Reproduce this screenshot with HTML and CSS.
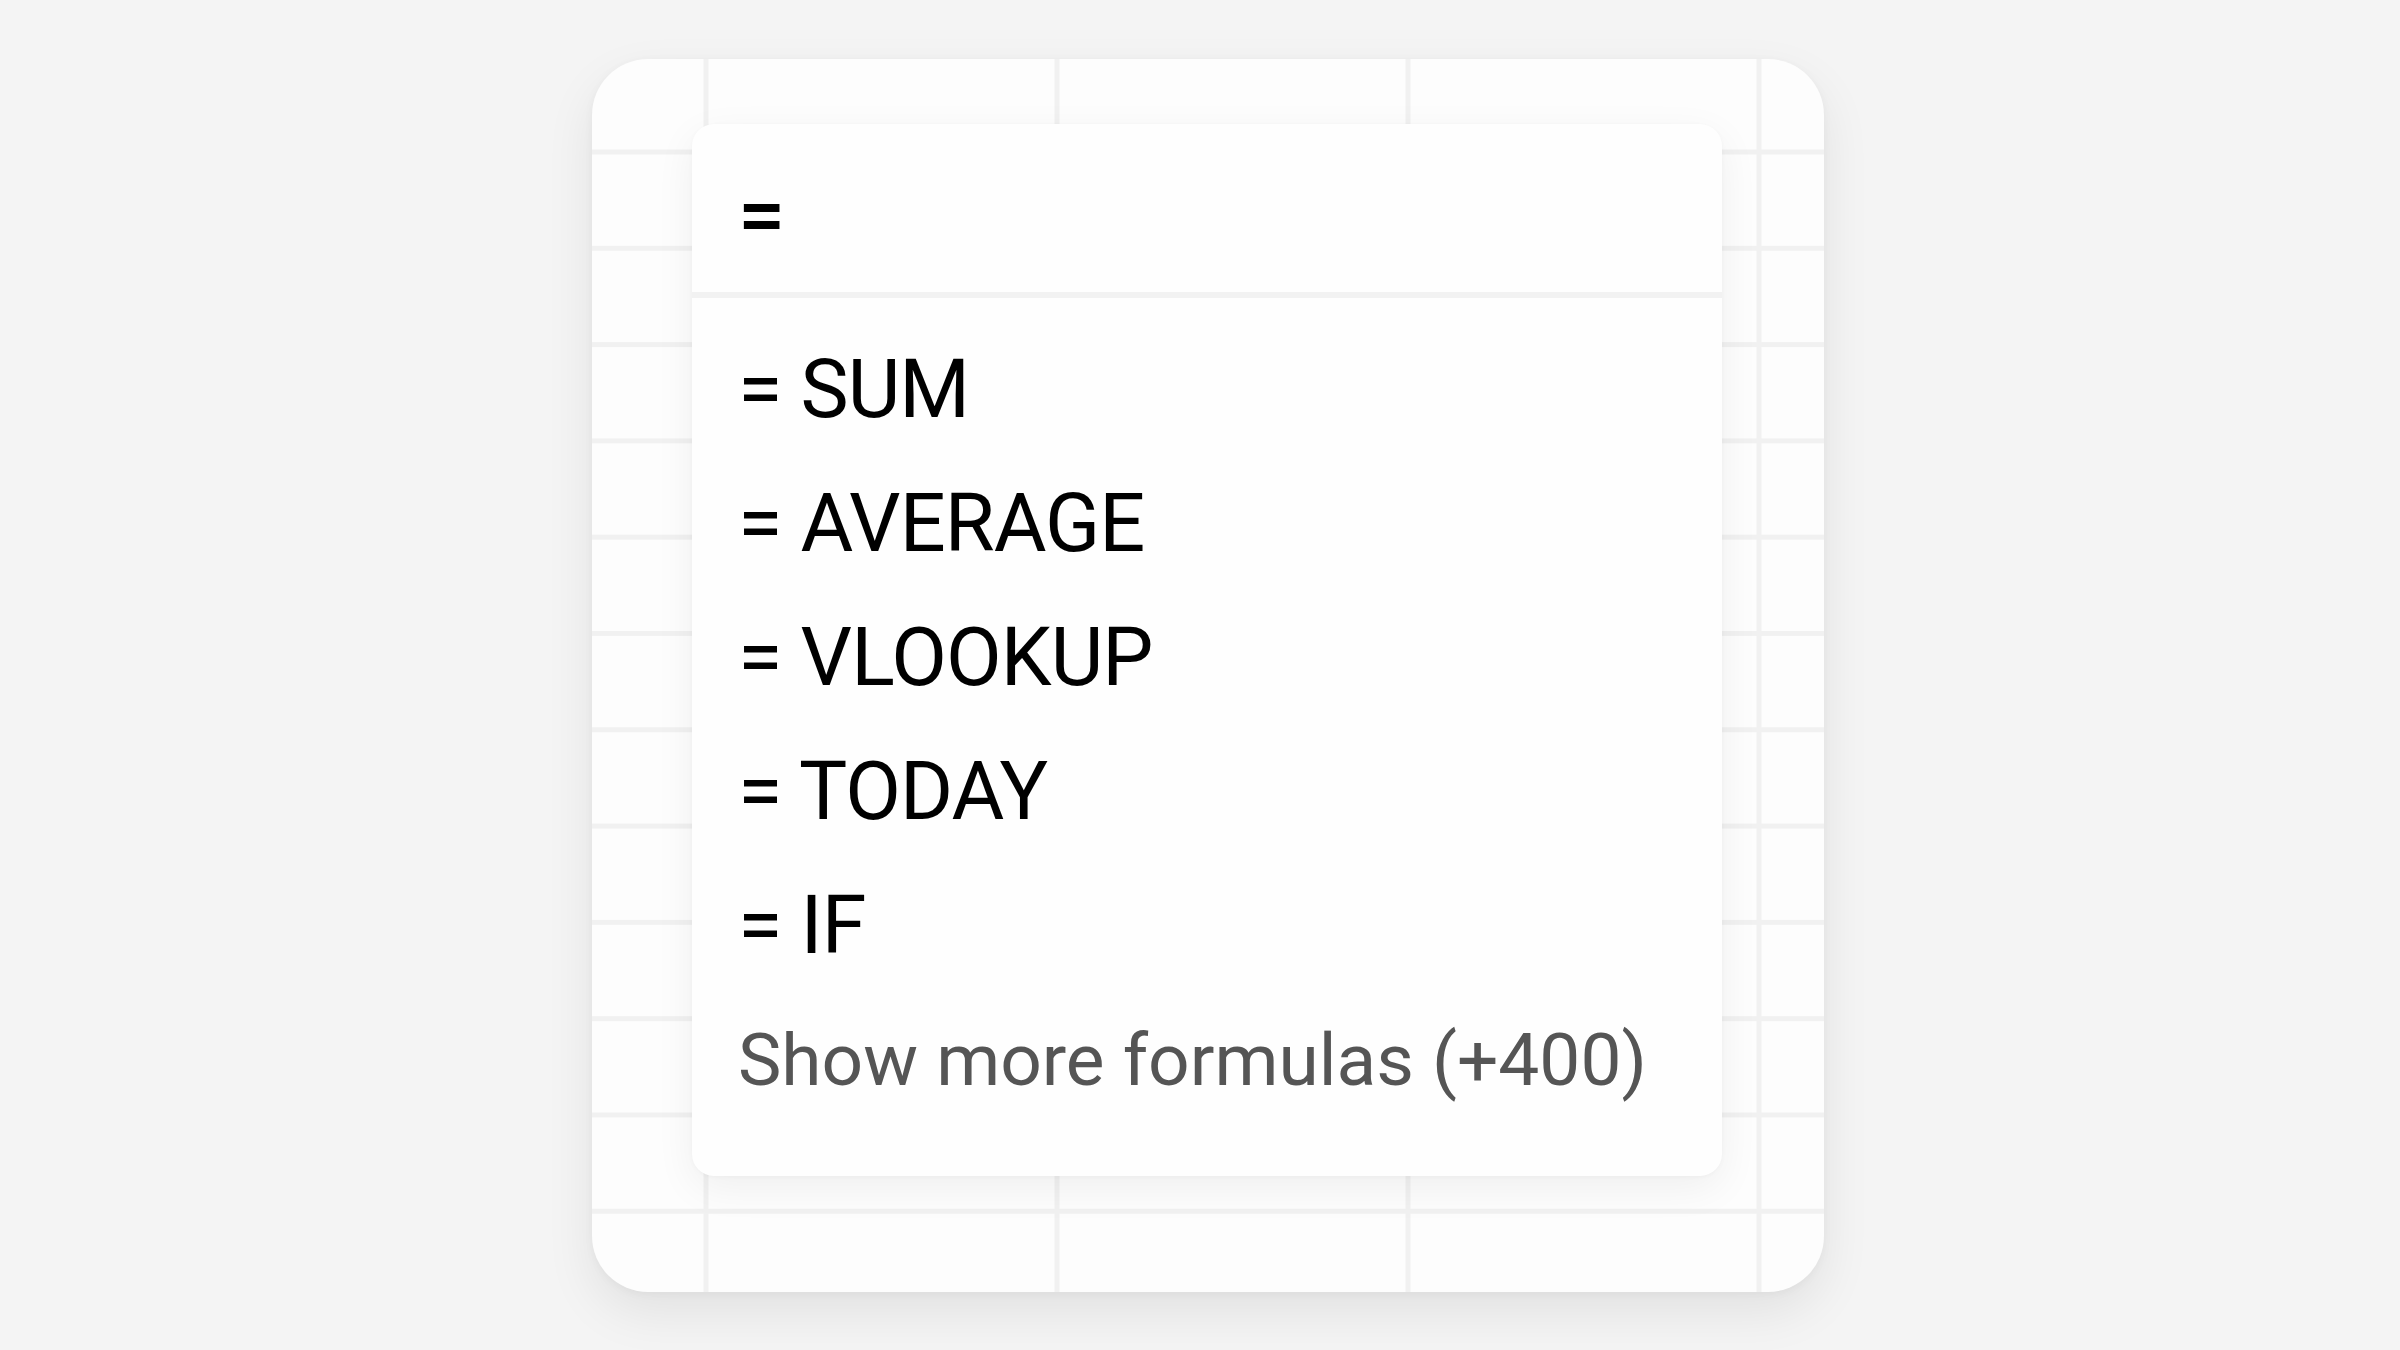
FILE: index.html
```html
<!DOCTYPE html>
<html lang="en">
<head>
    <meta charset="UTF-8">
    <meta name="viewport" content="width=device-width, initial-scale=1.0">
    <title>Formulas</title>
    <link rel="stylesheet" href="styles.css">
</head>
<body>
    <div class="sheet">
        <div class="popup">
            <div class="input">=</div>
            <ul class="formulas">
                <li>= SUM</li>
                <li>= AVERAGE</li>
                <li>= VLOOKUP</li>
                <li>= TODAY</li>
                <li>= IF</li>
                <li class="more">Show more formulas (+400)</li>
            </ul>
        </div>
    </div>
</body>
</html>
```

FILE: styles.css
```css
* {
    margin: 0;
    padding: 0;
    box-sizing: border-box;
}

body {
    background: #f4f4f4;
    width: 100vw;
    height: 100vh;
    display: flex;
    justify-content: center;
    align-items: center;
    font-family: Roboto, "Liberation Sans", sans-serif;
    color: #000;
}

/* hoja de calculo de fondo */
.sheet {
    width: 1232px;
    height: 1233px;
    margin-left: 16px;
    padding: 65px 0 0 100px;
    border-radius: 56px;
    background-color: #fdfdfd;
    background-image:
        linear-gradient(to bottom, #f1f1f1 5px, transparent 5px),
        linear-gradient(to right, #f1f1f1 5px, transparent 5px);
    background-size: 100% 96.3px, 351px 100%;
    background-position: 0 90.5px, 111.5px 0;
    box-shadow: 0 20px 50px rgba(0, 0, 0, 0.08), 0 2px 10px rgba(0, 0, 0, 0.04);
}

.popup {
    width: 1030px;
    background: #fefefe;
    border-radius: 22px;
    box-shadow: 0 12px 40px rgba(0, 0, 0, 0.06), 0 1px 4px rgba(0, 0, 0, 0.03);
}

.input {
    height: 174px;
    padding: 16px 0 0 46px;
    font-size: 84px;
    font-weight: 500;
    line-height: 152px;
    border-bottom: 6px solid #f2f2f2;
}

.formulas {
    list-style: none;
    padding: 25px 0 49px 46px;
}

.formulas li {
    font-size: 81px;
    line-height: 134px;
    letter-spacing: -0.012em;
}

.formulas .more {
    font-size: 73px;
    color: #555;
    letter-spacing: 0;
}
```
